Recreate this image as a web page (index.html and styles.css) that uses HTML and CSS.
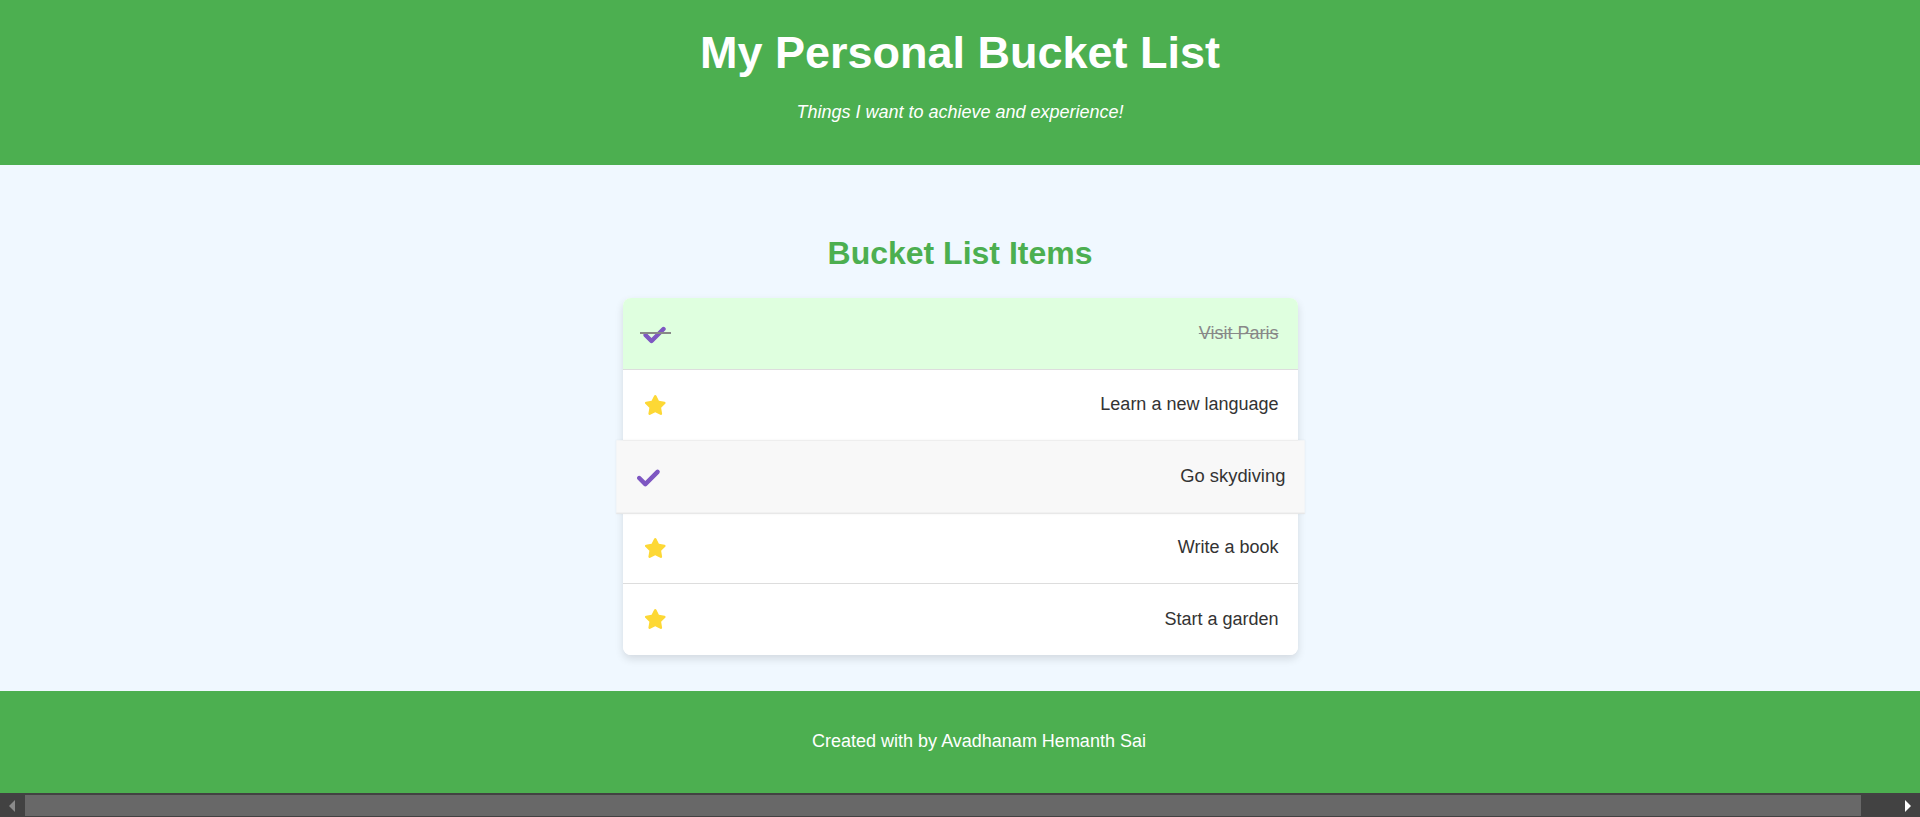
FILE: index.html
```html
<!DOCTYPE html>
<html lang="en">
<head>
<meta charset="utf-8">
<title>My Personal Bucket List</title>
<link rel="stylesheet" href="styles.css">
</head>
<body>
<header class="site-header">
  <h1 class="site-title">My Personal Bucket List</h1>
  <p class="site-subtitle">Things I want to achieve and experience!</p>
</header>

<main class="content">
  <h2 class="section-title">Bucket List Items</h2>
  <ul class="bucket-list">
    <li class="bucket-item done">
      <span class="icon-wrap struck">
        <svg class="icon-check" viewBox="-20 0 488 512" aria-hidden="true"><path d="M438.6 105.4c12.5 12.5 12.5 32.8 0 45.3l-256 256c-12.5 12.5-32.8 12.5-45.3 0l-128-128c-12.5-12.5-12.5-32.8 0-45.3s32.8-12.5 45.3 0L160 338.7 393.4 105.4c12.5-12.5 32.8-12.5 45.3 0z"/></svg>
      </span>
      <span class="item-text">Visit Paris</span>
    </li>
    <li class="bucket-item">
      <span class="icon-wrap">
        <svg class="icon-star" viewBox="0 0 576 512" aria-hidden="true"><path d="M316.9 18C311.6 7 300.4 0 288.1 0s-23.4 7-28.8 18L195 150.3 51.4 171.5c-12 1.8-22 10.2-25.7 21.7s-.7 24.2 7.9 32.7L137.8 329 113.2 474.7c-2 12 3 24.2 12.9 31.3s23 8 33.8 2.3l128.3-68.5 128.3 68.5c10.8 5.7 23.900 4.9 33.8-2.3s14.9-19.3 12.9-31.3L438.5 329 542.7 225.9c8.6-8.5 11.7-21.2 7.9-32.7s-13.7-19.9-25.7-21.7L381.2 150.3 316.9 18z"/></svg>
      </span>
      <span class="item-text">Learn a new language</span>
    </li>
    <li class="bucket-item hovered">
      <span class="icon-wrap">
        <svg class="icon-check" viewBox="-20 0 488 512" aria-hidden="true"><path d="M438.6 105.4c12.5 12.5 12.5 32.8 0 45.3l-256 256c-12.5 12.5-32.8 12.5-45.3 0l-128-128c-12.5-12.5-12.5-32.8 0-45.3s32.8-12.5 45.3 0L160 338.7 393.4 105.4c12.5-12.5 32.8-12.5 45.3 0z"/></svg>
      </span>
      <span class="item-text">Go skydiving</span>
    </li>
    <li class="bucket-item">
      <span class="icon-wrap">
        <svg class="icon-star" viewBox="0 0 576 512" aria-hidden="true"><path d="M316.9 18C311.6 7 300.4 0 288.1 0s-23.4 7-28.8 18L195 150.3 51.4 171.5c-12 1.8-22 10.2-25.7 21.7s-.7 24.2 7.9 32.7L137.8 329 113.2 474.7c-2 12 3 24.2 12.9 31.3s23 8 33.8 2.3l128.3-68.5 128.3 68.5c10.8 5.7 23.9 4.9 33.8-2.3s14.9-19.3 12.9-31.3L438.5 329 542.7 225.9c8.6-8.5 11.7-21.2 7.9-32.7s-13.7-19.9-25.7-21.7L381.2 150.3 316.9 18z"/></svg>
      </span>
      <span class="item-text">Write a book</span>
    </li>
    <li class="bucket-item">
      <span class="icon-wrap">
        <svg class="icon-star" viewBox="0 0 576 512" aria-hidden="true"><path d="M316.9 18C311.6 7 300.4 0 288.1 0s-23.4 7-28.8 18L195 150.3 51.4 171.5c-12 1.8-22 10.2-25.7 21.7s-.7 24.2 7.9 32.7L137.8 329 113.2 474.7c-2 12 3 24.2 12.9 31.3s23 8 33.8 2.3l128.3-68.5 128.3 68.5c10.8 5.7 23.9 4.9 33.8-2.3s14.9-19.3 12.9-31.3L438.5 329 542.7 225.9c8.6-8.5 11.7-21.2 7.9-32.7s-13.7-19.9-25.7-21.7L381.2 150.3 316.9 18z"/></svg>
      </span>
      <span class="item-text">Start a garden</span>
    </li>
  </ul>
</main>

<footer class="site-footer">
  <p class="footer-text">Created with by Avadhanam Hemanth Sai</p>
</footer>

<div class="hscrollbar" aria-hidden="true">
  <span class="hs-arrow hs-left"></span>
  <span class="hs-thumb"></span>
  <span class="hs-arrow hs-right"></span>
</div>
</body>
</html>
```

FILE: styles.css
```css
* {
  box-sizing: border-box;
}

html, body {
  margin: 0;
  padding: 0;
}

body {
  background: #ffffff;
  font-family: "Liberation Sans", Arial, sans-serif;
  color: #333333;
  height: 817px;
  overflow: hidden;
}

.site-header {
  background: #4caf50;
  color: #ffffff;
  text-align: center;
  padding: 27px 20px 42px;
}

.site-title {
  margin: 0;
  font-size: 45px;
  font-weight: bold;
  line-height: normal;
}

.site-subtitle {
  margin: 23px 0 0;
  font-size: 18px;
  font-style: italic;
  line-height: normal;
}

.content {
  background: #f0f8ff;
  padding: 43px 0 36.5px;
}

.section-title {
  margin: 26.5px 0 26.5px;
  text-align: center;
  color: #4caf50;
  font-size: 32px;
  font-weight: bold;
  line-height: normal;
}

.bucket-list {
  list-style: none;
  margin: 0 auto;
  padding: 0;
  width: 675px;
  background: #ffffff;
  border-radius: 8px;
  box-shadow: 0 4px 8px rgba(0, 0, 0, 0.12);
}

.bucket-item {
  display: flex;
  align-items: center;
  justify-content: space-between;
  height: 71.5px;
  padding: 0 19px 0 21px;
  border-bottom: 1px solid #dddddd;
  font-size: 18px;
  background: #ffffff;
}

.bucket-item:first-child {
  border-radius: 8px 8px 0 0;
}

.bucket-item:last-child {
  border-bottom: none;
  height: 70.5px;
  border-radius: 0 0 8px 8px;
}

.bucket-item.done {
  background: #dfffdf;
  color: #888888;
}

.bucket-item.done .item-text {
  text-decoration: line-through;
}

.bucket-item.hovered {
  background: #f8f8f8;
  transform: scale(1.02);
  border-bottom: 1px solid #e2e2e2;
  box-shadow: 0 0 2px rgba(0, 0, 0, 0.06);
  position: relative;
}

.icon-wrap {
  display: inline-flex;
  align-items: center;
  position: relative;
}

.icon-star {
  width: 22.5px;
  height: 20px;
  fill: #fdd835;
  display: block;
}

.icon-check {
  width: 23px;
  height: 24px;
  fill: #7e57c2;
  stroke: #7e57c2;
  stroke-width: 30;
  stroke-linejoin: round;
  display: block;
  margin-top: 3px;
  margin-left: -1px;
}

.struck::after {
  content: "";
  position: absolute;
  left: -4px;
  right: -5px;
  top: 12px;
  height: 2px;
  background: #888888;
}

.item-text {
  line-height: normal;
}

.site-footer {
  background: #4caf50;
  color: #ffffff;
  text-align: center;
  padding: 39.5px 0 41.5px 38px;
}

.footer-text {
  margin: 0;
  font-size: 18px;
  line-height: normal;
}

.hscrollbar {
  position: fixed;
  left: 0;
  right: 0;
  bottom: 0;
  height: 24px;
  background: #424242;
}

.hs-thumb {
  position: absolute;
  left: 25px;
  width: 1836px;
  top: 2px;
  bottom: 1px;
  background: #686868;
}

.hs-arrow {
  position: absolute;
  top: 7px;
  width: 0;
  height: 0;
  border-top: 6px solid transparent;
  border-bottom: 6px solid transparent;
}

.hs-left {
  left: 9px;
  border-right: 6px solid #8a8a8a;
}

.hs-right {
  right: 9px;
  border-left: 6px solid #ffffff;
}
```
